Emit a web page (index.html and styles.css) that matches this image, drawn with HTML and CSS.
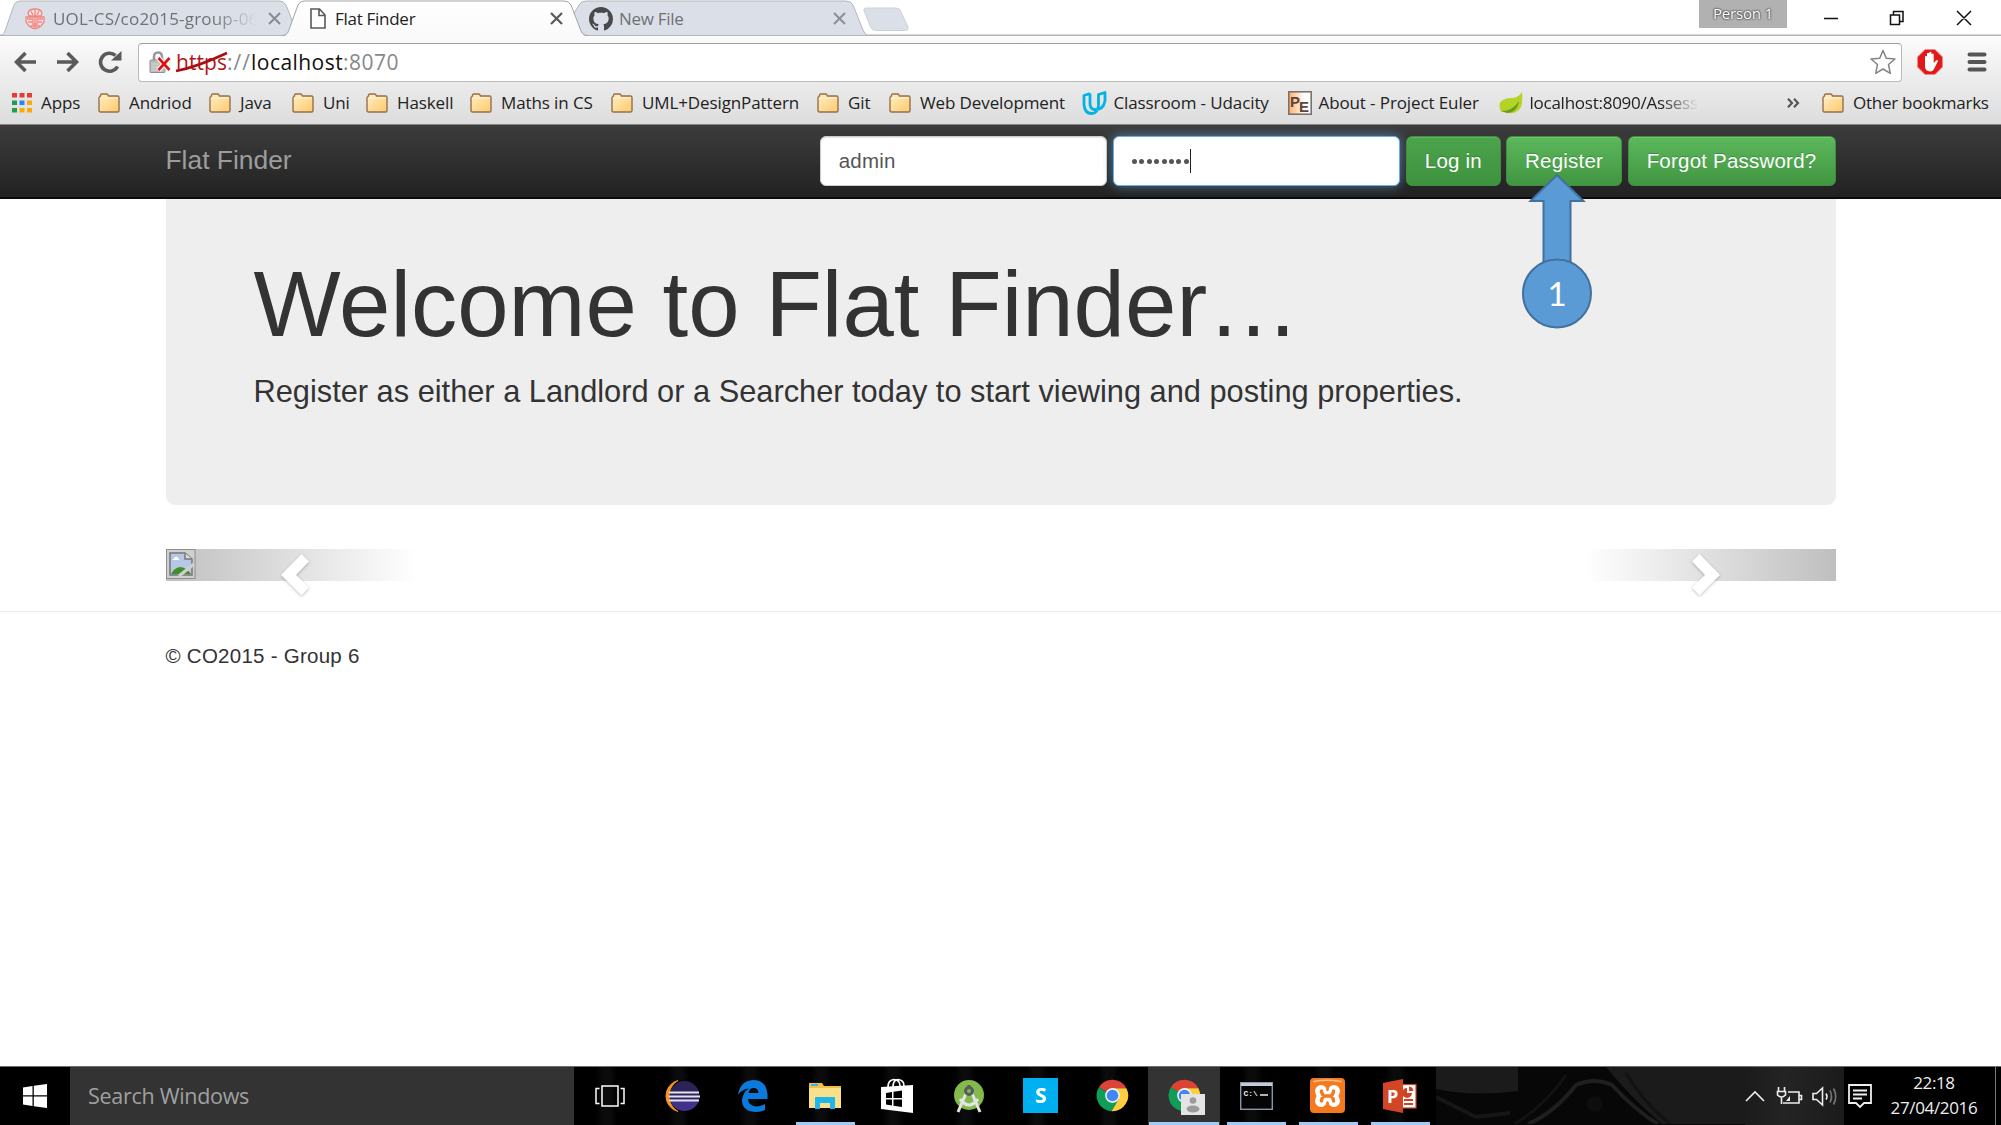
FILE: index.html
```html
<!DOCTYPE html>
<html lang="en">
<head>
<meta charset="utf-8">
<title>Flat Finder</title>
<link rel="stylesheet" href="styles.css">
</head>
<body>
<svg width="0" height="0" class="defs" aria-hidden="true">
  <defs>
    <linearGradient id="fold" x1="0" y1="0" x2="1" y2="1"><stop offset="0" stop-color="#ffefc4"/><stop offset="1" stop-color="#fdc96c"/></linearGradient>
    <linearGradient id="act" x1="0" y1="0" x2="0" y2="1"><stop offset="0" stop-color="#fff"/><stop offset="1" stop-color="#fafafa"/></linearGradient>
    <symbol id="folder" viewBox="0 0 22 20"><path d="M1 17.500V4.500L2.500 3V2Q3 1 4 1H8.500Q9.500 1 10 2L10.500 3H19.500Q21 3 21 4.500V17.500Q21 19 19.500 19H2.500Q1 19 1 17.500Z" fill="url(#fold)" stroke="#94704b" stroke-width="1.400"/><path d="M2 6.200Q2.200 5 3.500 5H20" fill="none" stroke="#fff3d6" stroke-width="1.200"/></symbol>
    <symbol id="chrome" viewBox="0 0 34 34"><path d="M17 17L2.900 8.600A16.300 16.300 0 0 1 31.300 9.500H17Z" fill="#db4437"/><path d="M17 17L2.900 8.600A16.300 16.300 0 0 0 16 33.300L23.500 21Z" fill="#0f9d58"/><path d="M17 9.500H31.300A16.300 16.300 0 0 1 16 33.300L23.500 20.700Z" fill="#ffcd40"/><circle cx="17" cy="17" r="7.600" fill="#f1f1f1"/><circle cx="17" cy="17" r="6" fill="#4285f4"/></symbol>
  </defs>
</svg>

<header class="chrome">
  <div class="tabstrip">
    <svg class="tabshapes" width="920" height="37" viewBox="0 0 920 37">
      <path d="M2 35.500Q4 34 5 31L14 5Q16 1 20 1H279Q284 1 286 5L296 30Q297 35.500 302 35.500Z" fill="#dbe0e8" stroke="#b4b6ba"/>
      <path d="M579 5Q581 1 586 1H846Q851 1 853 5L863 30Q865 35 868 35.500H585Q582 35.500 580 30L573 15Z" fill="#dbe0e8" stroke="#b4b6ba"/>
      <path d="M864 10.500Q863 8 867 8H895Q899 8 900 10L908 27Q909 30.500 905 30.500H877Q872 30.500 870.500 27Z" fill="#dbe0e8" stroke="#cdd1d6"/>
      <path d="M282 37Q287 36 288.500 31L298 5Q300 1 304 1H564Q569 1 571 5L581 31Q583 36 588 37Z" fill="url(#act)"/>
      <path d="M282 35.500Q287 35.500 288.500 31L298 5Q300 1 304 1H564Q569 1 571 5L581 31Q583 35.500 588 35.500" fill="none" stroke="#a2a4a8"/>
    </svg>
    <div class="tab tab-one">
      <svg width="20" height="22" viewBox="0 0 20 22" fill="none" stroke="#ee8781" stroke-width="1.300"><path d="M3 5Q4 1 10 1T17 5L16 8H4ZM1 9H19V14L16 18Q10 23 4 18L1 14Z" fill="#fde3e1"/><path d="M6 3L8 7M14 3L12 7M10 1V8M2 11H8V14H3M18 11H12V14H17M7 16H13M5 18H15M10 9V20"/></svg>
      <span class="tab-title fade">UOL-CS/co2015-group-06</span>
      <svg class="x" width="13" height="13" viewBox="0 0 13 13"><path d="M1 1L12 12M12 1L1 12" stroke="#868b91" stroke-width="2"/></svg>
    </div>
    <div class="tab tab-two">
      <svg width="16" height="21" viewBox="0 0 16 21"><path d="M1 1H9.500L15 7V20H1ZM9 1V7.500H15" fill="#fff" stroke="#58595b" stroke-width="1.600"/></svg>
      <span class="tab-title">Flat Finder</span>
      <svg class="x" width="13" height="13" viewBox="0 0 13 13"><path d="M1 1L12 12M12 1L1 12" stroke="#5a5a5a" stroke-width="2.200"/></svg>
    </div>
    <div class="tab tab-three">
      <svg width="24" height="24" viewBox="0 0 16 16"><path fill="#4a4a4c" d="M8 0C3.580 0 0 3.580 0 8c0 3.540 2.290 6.530 5.470 7.590.4.070.55-.17.55-.38 0-.19-.01-.82-.01-1.490-2.010.37-2.530-.49-2.690-.94-.09-.23-.48-.94-.82-1.130-.28-.15-.68-.52-.01-.53.63-.01 1.080.58 1.230.82.72 1.210 1.870.87 2.330.66.070-.52.28-.87.51-1.070-1.780-.2-3.640-.89-3.640-3.950 0-.87.31-1.590.82-2.150-.08-.2-.36-1.020.08-2.120 0 0 .67-.21 2.200.82.640-.18 1.320-.27 2-.27s1.360.09 2 .27c1.530-1.040 2.200-.82 2.200-.82.440 1.100.16 1.920.08 2.120.510.56.82 1.270.82 2.150 0 3.070-1.870 3.750-3.650 3.950.290.25.54.73.54 1.480 0 1.070-.01 1.930-.01 2.200 0 .21.15.46.55.38A8.010 8.010 0 0 0 16 8c0-4.420-3.580-8-8-8z"/></svg>
      <span class="tab-title">New File</span>
      <svg class="x" width="13" height="13" viewBox="0 0 13 13"><path d="M1 1L12 12M12 1L1 12" stroke="#8c9095" stroke-width="2"/></svg>
    </div>
    <div class="person">Person 1</div>
    <svg class="winbtns" width="150" height="18" viewBox="0 0 150 18" fill="none" stroke="#111" stroke-width="1.500"><path d="M1 9.500H15M67.500 6H76.500V15.500H67.500ZM70.500 6V2.500H80V12.500H77M134 2L148 16M148 2L134 16"/></svg>
  </div>

  <div class="toolbar">
    <svg class="navicons" width="110" height="24" viewBox="0 0 110 24" fill="none" stroke="#5a5a5a" stroke-width="3.600"><path d="M22 12H3M11.500 3L2.500 12L11.500 21M43 12H63M53.500 3L62.500 12L53.500 21"/><path d="M103.500 16.500A9 9 0 1 1 101.500 5.500"/><path d="M107.500 1V10.500H97Z" fill="#5a5a5a" stroke="none"/></svg>
    <div class="omnibox">
      <svg width="22" height="23" viewBox="0 0 22 23"><path d="M5 10V6Q5 1.500 9 1.500T13 6V10" fill="none" stroke="#9a9a9a" stroke-width="2.600"/><rect x="1" y="9" width="15" height="12.500" rx="1" fill="#bdbdbd" stroke="#8e8e8e"/><path d="M2 13H10M2 16H9M2 19H10" stroke="#d8d8d8"/><path d="M9.500 7L20.500 19M20.500 7L9.500 19" stroke="#fff" stroke-width="5"/><path d="M9.500 7L20.500 19M20.500 7L9.500 19" stroke="#e0110c" stroke-width="2.600"/></svg>
      <div class="url"><span class="bad">https</span><span class="dim sep">://</span><span class="host">localhost</span><span class="dim">:8070</span>
        <svg class="strike" width="54" height="22" viewBox="0 0 54 22"><path d="M1 20Q22 16 52 2" fill="none" stroke="#a80f12" stroke-width="2.600"/></svg></div>
      <svg class="star" width="26" height="26" viewBox="0 0 26 26"><path d="M13 1.500L16.300 9.300L25 10L18.500 15.500L20.300 24.300L13 20L5.700 24.300L7.500 15.500L1 10L9.700 9.300Z" fill="#fff" stroke="#848484" stroke-width="1.500" stroke-linejoin="round"/></svg>
    </div>
    <svg class="adblock" width="26" height="26" viewBox="0 0 26 26"><path d="M8 .5H18L25.500 8V18L18 25.500H8L.5 18V8Z" fill="#e2181b" stroke="#f18a8a"/><path d="M8 13V7.500Q9 6 10 7.500V11V4.500Q11 3 12.200 4.500V10V3.500Q13.500 2.200 14.500 3.500V10.500V5Q15.700 4 16.700 5V14L19 11.500Q20.500 10.500 21 12L17.500 19Q16 22.500 13 22.500Q8.500 22 8 18Z" fill="#fff"/></svg>
    <svg class="burger" width="20" height="20" viewBox="0 0 20 20" stroke="#555" stroke-width="4" stroke-linecap="round"><path d="M2.500 2.500H17.500M2.500 10H17.500M2.500 17.500H17.500"/></svg>
  </div>

  <nav class="bookmarks">
    <a class="bm"><svg width="20" height="20" viewBox="0 0 20 20"><path d="M0 0h5v4.500H0zM7.500 0h5v4.500h-5zM15 0h5v4.500h-5z" fill="#ea3a33"/><path d="M0 7.500h5V12H0zM0 15h5v4.500H0z" fill="#1f9d55"/><path d="M7.500 7.500h5V12h-5z" fill="#2a85f7"/><path d="M15 7.500h5V12h-5zM7.500 15h5v4.500h-5zM15 15h5v4.500h-5z" fill="#fba90a"/></svg><span>Apps</span></a>
    <a class="bm"><svg width="22" height="20"><use href="#folder"/></svg><span>Andriod</span></a>
    <a class="bm"><svg width="22" height="20"><use href="#folder"/></svg><span>Java</span></a>
    <a class="bm"><svg width="22" height="20"><use href="#folder"/></svg><span>Uni</span></a>
    <a class="bm"><svg width="22" height="20"><use href="#folder"/></svg><span>Haskell</span></a>
    <a class="bm"><svg width="22" height="20"><use href="#folder"/></svg><span>Maths in CS</span></a>
    <a class="bm"><svg width="22" height="20"><use href="#folder"/></svg><span>UML+DesignPattern</span></a>
    <a class="bm"><svg width="22" height="20"><use href="#folder"/></svg><span>Git</span></a>
    <a class="bm"><svg width="22" height="20"><use href="#folder"/></svg><span>Web Development</span></a>
    <a class="bm site"><svg width="25" height="24" viewBox="0 0 25 24" fill="none" stroke="#02b3e4" stroke-width="2.800" stroke-linejoin="round"><path d="M8 2.500L2 4.500V14Q3 22.500 9.500 22.500T16.500 14M8 2.500V13Q8.500 18.500 12.500 18.500Q21 19.500 23 10V1.500L16.500 3.500V14"/></svg><span>Classroom - Udacity</span></a>
    <a class="bm site"><svg width="24" height="24" viewBox="0 0 24 24"><defs><linearGradient id="pe"><stop offset="0" stop-color="#fdb16d"/><stop offset=".7" stop-color="#fff"/></linearGradient></defs><rect x=".8" y=".8" width="22.400" height="22.400" fill="url(#pe)" stroke="#7d7268" stroke-width="1.600"/><text x="2" y="16" class="pe">P</text><text x="11" y="21" class="pe">E</text></svg><span>About - Project Euler</span></a>
    <a class="bm leaf"><svg width="24" height="24" viewBox="0 0 24 24"><path d="M23 1Q24 10 22 16Q18 23 10 22L2 20.500Q-2 12 4 9Q8 6.500 14 7Q20 6 23 1Z" fill="#b4d327"/><path d="M2 20Q14 20 20 10Q18 22 8 22Z" fill="#6c9c1d"/></svg><span class="fade">localhost:8090/Assess</span></a>
    <svg class="more" width="13" height="10" viewBox="0 0 13 10" fill="none" stroke="#555" stroke-width="2.200"><path d="M1 .8L5 5L1 9.200M7 .8L11 5L7 9.200"/></svg>
    <a class="bm other"><svg width="22" height="20"><use href="#folder"/></svg><span>Other bookmarks</span></a>
  </nav>
</header>

<main class="page">
  <div class="navbar">
    <div class="container bar">
      <a class="brand">Flat Finder</a>
      <form class="login">
        <div class="field">admin</div>
        <div class="field focus"><span class="dots"><i></i><i></i><i></i><i></i><i></i><i></i><i></i><i></i></span><span class="caret"></span></div>
        <div class="btn pressed">Log in</div>
        <div class="btn reg">Register</div>
        <div class="btn forgot">Forgot Password?</div>
      </form>
    </div>
  </div>
  <div class="container">
    <section class="jumbotron">
      <h1>Welcome to Flat Finder…</h1>
      <p>Register as either a Landlord or a Searcher today to start viewing and posting properties.</p>
    </section>
    <section class="carousel">
      <div class="ctl prev">
        <svg width="30" height="30" viewBox="0 0 30 30"><rect x=".5" y=".5" width="28.500" height="29" fill="#cfcfcf" stroke="#8e8e8e"/><path d="M4 4H19L26 10V26H4Z" fill="#b7c8e6" stroke="#777" stroke-width="1.500"/><path d="M19 4V10H26" fill="#ddd" stroke="#777" stroke-width="1.500"/><path d="M6 11Q8 10 9 8Q12 7 13 11Z" fill="#fff"/><path d="M5 25Q8 19 14 18Q20 18 25 25Z" fill="#3f8f27"/><path d="M13 27L28 15" stroke="#cfcfcf" stroke-width="3.500"/></svg>
      </div>
      <div class="ctl next"></div>
      <svg class="chev left" width="34" height="48" viewBox="0 0 34 48"><path d="M23.500 2L31 9.500L18 23L31 35.500L23.500 43.500L3 23Z" fill="#fff"/></svg>
      <svg class="chev right" width="34" height="48" viewBox="0 0 34 48"><path d="M10.500 2L3 9.500L16 23L3 35.500L10.500 43.500L31 23Z" fill="#fff"/></svg>
    </section>
  </div>
  <hr>
  <footer class="container">© CO2015 - Group 6</footer>
  <svg class="callout" width="74" height="158" viewBox="0 0 74 158" fill="#5b9bd5" stroke="#41719c" stroke-width="2"><path d="M37 3L63.500 29H50.500V100H23.500V29H10.500Z"/><circle cx="37" cy="121.500" r="34"/><text x="37" y="134" text-anchor="middle" class="num">1</text></svg>
</main>

<footer class="taskbar">
  <div class="start"><svg width="24" height="24" viewBox="0 0 24 24" fill="#fff"><path d="M0 3.500L9.500 2V11.200H0ZM10.800 1.800L24 0V11.200H10.800ZM0 12.600H9.500V22L0 20.500ZM10.800 12.600H24V24L10.800 22.200Z"/></svg></div>
  <div class="search">Search Windows</div>
  <div class="slot"><svg width="30" height="22" viewBox="0 0 30 22" fill="none" stroke="#fff" stroke-width="1.500"><path d="M7 1H23V21H7ZM4.500 3.500H1V18.500H4.500M25.500 3.500H29V18.500H25.500"/></svg></div>
  <div class="slot"><svg width="36" height="34" viewBox="0 0 36 34"><path d="M14 1.500A16 16 0 0 0 14 32.500A18 18 0 0 1 14 1.500Z" fill="#f7941e" stroke="#f7941e"/><circle cx="20.500" cy="17" r="15" fill="#2c2255"/><path d="M6 20H35Q33 31 20 32Q9 31 6 20Z" fill="#40328a"/><path d="M5 13.500H35M4.500 17.500H36M5 21.500H35" stroke="#e4e1f2" stroke-width="2"/></svg></div>
  <div class="slot"><svg width="30" height="32" viewBox="0 0 30 32"><path d="M0 15Q2 1 15 0Q28 0 29.500 14V19H10Q10.500 26 18 26.500Q23 26.500 27 24V30Q22 32 17 32Q4 31 4 20Q5 12 11 8.500Q4 9 0 15ZM10.500 13H20.500Q20 8 15.500 8Q11.500 8 10.500 13Z" fill="#0a7bdc" fill-rule="evenodd"/></svg></div>
  <div class="slot run"><svg width="32" height="28" viewBox="0 0 32 28"><path d="M0 1H13L15 4H32V26H0Z" fill="#f0c04b"/><path d="M0 6H32V26H0Z" fill="#fbe08a"/><path d="M2 2H9V4H2Z" fill="#3fb2e3"/><path d="M6 27V16Q6 15 7 15H25Q26 15 26 16V27H21V21H11V27Z" fill="#1fb6ee"/></svg></div>
  <div class="slot"><svg width="32" height="36" viewBox="0 0 32 36"><path d="M0 9L32 7V35L0 31Z" fill="#fff"/><path d="M7 9Q7 2 13 1.500Q19 2 19 8M12 9Q12 2 17 1.500Q23 2 23 8" fill="none" stroke="#fff" stroke-width="1.600"/><path d="M5 15L11 14V20H5ZM12.500 13.800L21 12.500V20H12.500ZM5 21.500H11V27.500L5 26.500ZM12.500 21.500H21V29L12.500 27.800Z" fill="#000"/></svg></div>
  <div class="slot"><svg width="32" height="34" viewBox="0 0 32 34"><circle cx="16" cy="16" r="15" fill="#84b94b"/><path d="M14 12L5 33M18 12L27 33M7 20Q16 32 25 20" fill="none" stroke="#e4e4e4" stroke-width="3"/><circle cx="16" cy="12" r="3.500" fill="#84b94b" stroke="#545d5c" stroke-width="3"/><path d="M16 6V9" stroke="#545d5c" stroke-width="3"/></svg></div>
  <div class="slot"><div class="skype">S</div></div>
  <div class="slot"><svg width="33" height="33"><use href="#chrome"/></svg></div>
  <div class="slot run active"><svg width="33" height="33"><use href="#chrome"/></svg><svg class="badge" width="24" height="21" viewBox="0 0 24 21"><rect width="24" height="21" fill="#e4e4e4"/><circle cx="12" cy="6.500" r="3.300" fill="#9b9b9b"/><ellipse cx="12" cy="15" rx="6.500" ry="3.500" fill="#9b9b9b"/></svg></div>
  <div class="slot run"><svg width="33" height="28" viewBox="0 0 33 28"><rect x=".7" y=".7" width="31.600" height="26.600" fill="#050505" stroke="#8b97a5" stroke-width="1.400"/><path d="M1 2.500H32" stroke="#c3ccd8" stroke-width="3"/><text x="3.500" y="13.500" class="cmd">C:\</text><path d="M20 13H28" stroke="#eee" stroke-width="1.500"/></svg></div>
  <div class="slot run"><svg width="35" height="35" viewBox="0 0 35 35" fill="none" stroke-linecap="round"><rect width="35" height="35" rx="4" fill="#f57a1f"/><path d="M4 3.500Q17 1 31 3.500" stroke="#ffc08a" stroke-width="1.500"/><path d="M11 13L13 18L11 23M24 13L22 18L24 23M13 18H22" stroke="#fff" stroke-width="12" stroke-linejoin="round"/><path d="M11.500 13Q11.500 16 14 18Q11.500 20 11.500 23M23.500 13Q23.500 16 21 18Q23.500 20 23.500 23M14 18H21" stroke="#f57a1f" stroke-width="3.400"/><path d="M17.500 8V12M17.500 24.500V28.500" stroke="#f57a1f" stroke-width="2.500"/></svg></div>
  <div class="slot run"><svg width="34" height="34" viewBox="0 0 34 34"><rect x="17" y="5.500" width="16" height="23.500" fill="#fff" stroke="#d04423" stroke-width="1.200"/><path d="M21 21H30M21 25H30" stroke="#d04423" stroke-width="2"/><path d="M24 9A5 5 0 1 0 29 14H24Z" fill="#d04423"/><path d="M26 7.500A5 5 0 0 1 30.500 12H26Z" fill="#d04423"/><path d="M0 4L20 0V34L0 30Z" fill="#d24625"/><text x="4" y="23.500" class="ppt">P</text></svg></div>
  <div class="desk"><svg width="309" height="57" viewBox="0 0 309 57" fill="none"><path d="M0 22Q40 30 82 24V0H0ZM170 0H309V57H226Q196 32 170 0Z" fill="#1b1b1b"/><path d="M0 30L40 50L74 46" stroke="#161616" stroke-width="4"/><path d="M92 57Q118 46 140 18Q158 10 176 18Q200 44 222 57" stroke="#1f1f1f" stroke-width="4"/><path d="M78 57Q108 40 130 8M190 6Q206 34 234 57" stroke="#121212" stroke-width="3"/><circle cx="159" cy="37" r="8" fill="#0e0e0e"/></svg></div>
  <div class="tray">
    <svg width="94" height="24" viewBox="0 0 94 24" fill="none" stroke="#eee" stroke-width="1.600"><path d="M1 17L10 8L19 17"/><path d="M43 8H54V19H38M54 11.500H56.500V15.500H54"/><path d="M33.500 3V7M39.500 3V7M32.500 7.500H40.500V11Q36.500 15 32.500 11ZM36.500 13V20"/><path d="M41 17L45 12V17Z" fill="#eee" stroke="none"/><path d="M68 9.500H71.500L77.500 4V21L71.500 15.500H68Z"/><path d="M81 9.500Q83 12.500 81 15.500"/><path d="M85 6.500Q88 12.500 85 18.500M88.500 4.500Q93 12.500 88.500 20.500" stroke="#777"/></svg>
  </div>
  <div class="clock">
    <svg width="24" height="25" viewBox="0 0 24 25" fill="none" stroke="#eee" stroke-width="1.800"><path d="M1 1H23V19H16L12 23L8 19H1ZM5 6.500H19M5 10.500H19M5 14.500H14"/></svg>
    <div class="time">22:18<br>27/04/2016</div>
  </div>
  <div class="peek"></div>
</footer>
</body>
</html>
```
FILE: styles.css
```css
* { box-sizing: border-box; }
body { margin: 0; width: 2001px; height: 1125px; overflow: hidden; display: flex; flex-direction: column; background: #fff; color: #333; font-family: "Liberation Sans", Arial, sans-serif; font-size: 20.5px; }
svg { display: block; flex: none; }
.defs { position: absolute; }

.chrome { height: 124.500px; flex: none; font-family: "Open Sans", "Noto Sans", sans-serif; font-size: 17px; color: #222; background: linear-gradient(#fff 0 36px, #fbfbfb 37px, #dedede 120px); border-bottom: 1.500px solid #868686; white-space: nowrap; }
.tabstrip { position: relative; height: 36px; display: flex; box-shadow: inset 0 -1.500px #b3b3b3; }
.tabshapes { position: absolute; left: 0; top: 0; }
.tab { position: relative; height: 37px; display: flex; align-items: center; color: #6f7174; letter-spacing: -0.28px; }
.tab .x { margin-left: auto; }
.tab-one { width: 289px; padding: 0 8px 0 25px; gap: 8px; letter-spacing: 0.2px; }
.tab-one .tab-title { width: 204px; overflow: hidden; }
.tab-two { width: 580px; margin-left: -289px; padding: 0 17px 0 310px; gap: 9px; color: #222; }
.tab-three { width: 283px; padding: 0 17px 0 9px; gap: 6px; }
.fade { -webkit-mask-image: linear-gradient(90deg, #000 78%, transparent 100%); mask-image: linear-gradient(90deg, #000 78%, transparent 100%); }
.person { margin-left: 836px; width: 88px; height: 28px; background: #b1b1b1; color: #fff; font-size: 15px; line-height: 27px; letter-spacing: -0.18px; text-align: center; text-shadow: 0 0 2px #333, 0 0 2px #333; }
.winbtns { margin: 9px 0 0 36px; }

.toolbar { height: 46px; display: flex; align-items: center; padding: 7px 14px 1px; }
.omnibox { width: 1765px; height: 39px; margin-left: 14px; display: flex; align-items: center; background: #fff; border: 1px solid #b9b9b9; border-top-color: #9d9d9d; border-radius: 4px; padding: 0 5px 0 10px; }
.url { position: relative; display: flex; margin-left: 5px; font-size: 21px; line-height: 36px; letter-spacing: 0.45px; }
.sep { letter-spacing: 1.050px; }
.strike { position: absolute; left: -1px; top: 7px; }
.bad { color: #b3151a; letter-spacing: 0.050px; }
.dim { color: #888; }
.host { color: #111; }
.star { margin-left: auto; }
.adblock { margin-left: 15px; }
.burger { margin-left: 24px; }

.bookmarks { height: 41px; display: grid; grid-template-columns: 86px 111px 83px 74px 104px 141px 206px 72px 193px 206px 209px 290px 35px 1fr; align-items: center; padding-left: 12px; letter-spacing: -0.110px; }
.bm { display: flex; align-items: center; gap: 9px; line-height: 30px; }
.site { gap: 6.500px; }
.leaf { padding-left: 2px; gap: 6.500px; letter-spacing: -0.250px; }
.other { letter-spacing: -0.260px; }
.pe { font: bold 15px "Liberation Sans", sans-serif; fill: #5f4636; letter-spacing: 0; }

.page { position: relative; flex: 1; }
.container { width: 1670px; margin: 0 165px 0 165.5px; }
.navbar { height: 74.500px; background: linear-gradient(#3c3c3c, #222); border-bottom: 2px solid #0a0a0a; }
.bar { display: flex; justify-content: space-between; padding-top: 11.500px; }
.brand { font-size: 26.4px; line-height: 49px; color: #9d9d9d; }
.login { display: flex; gap: 5.700px; color: #fff; letter-spacing: 0.210px; }
.field { width: 287.500px; height: 50px; border: 1.500px solid #ccc; border-radius: 6px; background: #fff; color: #555; padding: 0 18px; display: flex; align-items: center; box-shadow: inset 0 1px 1px rgba(0,0,0,.1); }
.focus { border-color: #66afe9; box-shadow: 0 0 12px rgba(102,175,233,.6); }
.dots { display: flex; gap: 2.400px; }
.dots i { width: 5px; height: 5px; border-radius: 50%; background: #555; }
.caret { width: 1.500px; height: 24px; background: #222; margin-left: 1px; }
.btn { width: 94.500px; height: 50px; border: 1.500px solid #3e8f3e; border-radius: 6px; background: linear-gradient(#5cb85c, #419641); display: flex; align-items: center; justify-content: center; box-shadow: inset 0 1px rgba(255,255,255,.15); text-shadow: 0 -1px rgba(0,0,0,.2); white-space: nowrap; }
.pressed { background: linear-gradient(#4ba44b, #3f923f); }
.reg { width: 115.500px; }
.forgot { width: 208px; }

.jumbotron { height: 306px; background: #eee; border-radius: 0 0 9px 9px; padding: 53.500px 88px 0; }
h1 { margin: 0; font-size: 92.3px; font-weight: 400; line-height: 102px; letter-spacing: 0.060px; }
p { margin: 15px 0 0; font-size: 30.77px; line-height: 43px; white-space: nowrap; }
.carousel { position: relative; height: 32px; margin-top: 44px; display: flex; justify-content: space-between; }
.ctl { width: 250px; height: 32px; }
.prev { background: linear-gradient(90deg, #bfbfbf, #fff); }
.next { background: linear-gradient(270deg, #bfbfbf, #fff); }
.chev { position: absolute; top: 3px; filter: drop-shadow(0 1.500px 1.500px rgba(0,0,0,.25)); }
.left { left: 112.500px; }
.right { left: 1523.500px; }
hr { margin: 30px 0 0; border: 0; border-top: 1.500px solid #eaeaea; }
footer.container { margin-top: 31px; line-height: 26px; letter-spacing: 0.260px; }
.callout { position: absolute; left: 1520px; top: 47.500px; }
.num { font: 33px Lato, "Open Sans", sans-serif; fill: #fff; stroke: none; }

.taskbar { height: 59px; flex: none; display: flex; background: #000; border-top: 1.500px solid #6d6d6d; color: #eee; font-family: "Open Sans", "Noto Sans", sans-serif; white-space: nowrap; }
.start { width: 70px; display: flex; align-items: center; padding-left: 23px; }
.search { width: 504px; background: #333; color: #a0a0a0; font-size: 21.5px; letter-spacing: -0.290px; padding-left: 18px; line-height: 57px; }
.slot { position: relative; width: 71.800px; display: flex; align-items: center; justify-content: center; padding-bottom: 1px; background: linear-gradient(90deg, #000 0 30%, #0b0b0b 40% 50%, #000 60%); }
.run::after { content: ""; position: absolute; left: 7px; right: 6px; bottom: 0; height: 3px; background: #9fcbf7; }
.active { background: #333; }
.active::after { left: 1px; right: 1px; }
.badge { position: absolute; left: 33px; top: 27px; }
.skype { width: 35px; height: 35px; background: #00aff0; color: #fff; font: bold 21px/35px "Open Sans", sans-serif; text-align: center; }
.cmd { font: bold 8px "Liberation Mono", monospace; fill: #eee; }
.ppt { font: bold 18px "Open Sans", sans-serif; fill: #fff; }
.desk { width: 309.400px; background: #070707; overflow: hidden; }
.tray { width: 99px; display: flex; align-items: center; background: linear-gradient(90deg, #1b1b1b, #242424 40%, #1b1b1b); }
.clock { width: 151px; display: flex; align-items: center; gap: 15px; padding-left: 4px; }
.time { font-size: 17px; letter-spacing: -0.350px; line-height: 25px; text-align: center; width: 94px; padding-bottom: 3px; }
.peek { border-left: 1px solid #777; flex: 1; }
```
